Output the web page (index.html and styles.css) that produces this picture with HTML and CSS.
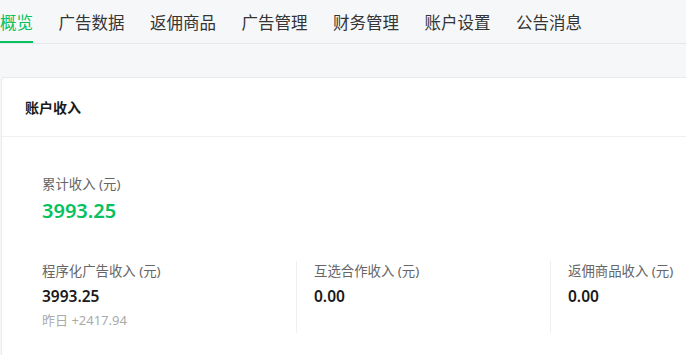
FILE: index.html
```html
<!DOCTYPE html>
<html lang="zh">
<head>
<meta charset="utf-8">
<link rel="stylesheet" href="styles.css">
</head>
<body>
<nav class="tabs">
  <a class="tab active">概览</a>
  <a class="tab">广告数据</a>
  <a class="tab">返佣商品</a>
  <a class="tab">广告管理</a>
  <a class="tab">财务管理</a>
  <a class="tab">账户设置</a>
  <a class="tab">公告消息</a>
</nav>
<main class="content">
  <section class="card">
    <header class="card-head">账户收入</header>
    <div class="card-body">
      <div class="total">
        <div class="label">累计收入 (元)</div>
        <div class="total-value">3993.25</div>
      </div>
      <div class="stats">
        <div class="stat">
          <div class="label">程序化广告收入 (元)</div>
          <div class="value">3993.25</div>
          <div class="sub">昨日 +2417.94</div>
        </div>
        <div class="stat">
          <div class="label">互选合作收入 (元)</div>
          <div class="value">0.00</div>
        </div>
        <div class="stat">
          <div class="label">返佣商品收入 (元)</div>
          <div class="value">0.00</div>
        </div>
      </div>
    </div>
  </section>
</main>
</body>
</html>
```

FILE: styles.css
```css
* { box-sizing: border-box; }
html, body {
  margin: 0;
  padding: 0;
  width: 686px;
  height: 355px;
  overflow: hidden;
  background: #f6f7f9;
  font-family: "Noto Sans", "Noto Sans CJK SC", sans-serif;
}
.tabs {
  display: flex;
  gap: 25.5px;
  height: 44px;
  border-bottom: 1px solid #e6e7ea;
  background: #f6f7f9;
}
.tab {
  display: flex;
  align-items: center;
  height: 43px;
  font-size: 16.5px;
  color: #353535;
  white-space: nowrap;
  border-bottom: 2px solid transparent;
  padding-top: 2px;
}
.tab.active {
  color: #07c160;
  border-bottom-color: #07c160;
}
.content {
  padding: 33px 0 0 1px;
}
.card {
  width: 685px;
  height: 278px;
  overflow: hidden;
  background: #fff;
  border: 1px solid #e9eaec;
  border-right: none;
  border-bottom: none;
  border-radius: 4px 0 0 0;
}
.card-head {
  height: 59px;
  display: flex;
  align-items: center;
  padding-left: 23px;
  font-size: 14px;
  font-weight: 700;
  color: #1a1a1a;
  border-bottom: 1px solid #eeeff1;
}
.card-body {
  padding: 38px 0 0 40px;
}
.label {
  font-size: 13.4px;
  color: #666;
  line-height: 18px;
  white-space: nowrap;
}
.total-value {
  margin-top: 5px;
  font-size: 20px;
  font-weight: 600;
  color: #07c160;
  line-height: 26px;
}
.stats {
  display: flex;
  margin-top: 37px;
}
.stat {
  flex: none;
  width: 254px;
  height: 72px;
  padding-top: 1px;
}
.stat + .stat {
  border-left: 1px solid #eeeff1;
  padding-left: 17px;
}
.value {
  margin-top: 6px;
  font-size: 15.5px;
  font-weight: 600;
  color: #1a1a1a;
  line-height: 20px;
}
.sub {
  margin-top: 5px;
  font-size: 13px;
  color: #aaa;
  line-height: 18px;
}
```
